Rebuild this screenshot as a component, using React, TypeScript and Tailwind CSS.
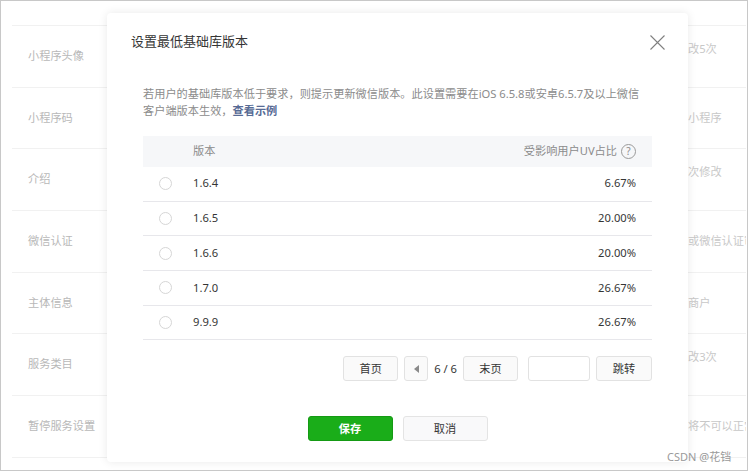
const bgRows = [
  { label: '小程序头像', note: '改5次', top: true },
  { label: '小程序码', note: '小程序', top: false },
  { label: '介绍', note: '次修改', top: true },
  { label: '微信认证', note: '或微信认证审', top: false },
  { label: '主体信息', note: '商户', top: false },
  { label: '服务类目', note: '改3次', top: true },
  { label: '暂停服务设置', note: '将不可以正常', top: false },
]

const versions = [
  { v: '1.6.4', uv: '6.67%' },
  { v: '1.6.5', uv: '20.00%' },
  { v: '1.6.6', uv: '20.00%' },
  { v: '1.7.0', uv: '26.67%' },
  { v: '9.9.9', uv: '26.67%' },
]

function PageButton({ children, width }: { children: React.ReactNode; width: string }) {
  return (
    <button
      className={`${width} h-[25px] flex items-center justify-center rounded-[3px] border border-[#e2e2e2] bg-[#fafafa] text-[11.2px] text-[#353535]`}
    >
      {children}
    </button>
  )
}

export default function App() {
  return (
    <div className="relative w-[748px] h-[471px] overflow-hidden bg-white border border-[#c8c8c8] font-[family-name:'Noto_Sans','Noto_Sans_CJK_SC',sans-serif]">
      {/* page behind the dialog */}
      <ul className="mt-[24px] ml-[11px] mr-[1px] border-t border-[#f1f1f1]">
        {bgRows.map((row) => (
          <li key={row.label} className="flex h-[61.7px] border-b border-[#f1f1f1]">
            <span className="w-[676px] shrink-0 self-center pl-[16px] text-[11.2px] text-[#b8b8b8]">
              {row.label}
            </span>
            <span
              className={`flex-1 min-w-0 overflow-hidden whitespace-nowrap text-[11.2px] text-[#c8c8c8] ${
                row.top ? 'self-start pt-[15px]' : 'self-center'
              }`}
            >
              {row.note}
            </span>
          </li>
        ))}
      </ul>

      {/* dialog */}
      <div className="absolute left-[106px] top-[12px] w-[581px] h-[449px] flex flex-col rounded-[4px] bg-white shadow-[0_0_10px_rgba(0,0,0,0.09)]">
        <div className="flex items-center justify-between h-[58px] pl-[24px] pr-[23px]">
          <h2 className="text-[13px] text-[#353535]">设置最低基础库版本</h2>
          <svg width="15" height="15" viewBox="0 0 15 15">
            <path d="M0.5 0.5 L14.5 14.5 M14.5 0.5 L0.5 14.5" stroke="#7f7f7f" strokeWidth="1.1" />
          </svg>
        </div>

        <div className="px-[36px] pt-[14px]">
          <p className="text-[11.2px] leading-[17px] text-[#8b8b8b] whitespace-nowrap">
            若用户的基础库版本低于要求，则提示更新微信版本。此设置需要在iOS 6.5.8或安卓6.5.7及以上微信
            <br />
            客户端版本生效，<a className="font-semibold text-[#576b95]">查看示例</a>
          </p>

          <div className="mt-[16.5px]">
            <div className="flex items-center h-[31.5px] bg-[#f6f7f9] pr-[16px] text-[11.2px] text-[#8b8b8b]">
              <span className="w-[50px] shrink-0" />
              <span className="flex-1">版本</span>
              <span className="flex items-center gap-[4px]">
                受影响用户UV占比
                <span className="flex items-center justify-center w-[15px] h-[15px] rounded-full border border-[#9a9a9a] text-[10px] leading-none text-[#8b8b8b]">
                  ?
                </span>
              </span>
            </div>
            {versions.map((row) => (
              <div
                key={row.v}
                className="flex items-center h-[34.7px] border-b border-[#e7e7eb] pr-[16px] text-[11.2px] text-[#353535]"
              >
                <span className="w-[50px] shrink-0 pl-[16px]">
                  <span className="block w-[13px] h-[13px] rounded-full border border-[#d6d6d6] bg-white" />
                </span>
                <span className="flex-1">{row.v}</span>
                <span>{row.uv}</span>
              </div>
            ))}
          </div>

          <div className="flex items-center justify-end mt-[16px]">
            <PageButton width="w-[55px]">首页</PageButton>
            <div className="ml-[6px]">
              <PageButton width="w-[24px]">
                <svg width="5" height="8" viewBox="0 0 5 8">
                  <polygon points="5,0 5,8 0,4" fill="#8a8a8a" />
                </svg>
              </PageButton>
            </div>
            <span className="mx-[6px] text-[11.2px] text-[#353535]">6 / 6</span>
            <PageButton width="w-[55px]">末页</PageButton>
            <span className="ml-[10px] w-[62px] h-[25px] rounded-[3px] border border-[#e2e2e2] bg-white" />
            <div className="ml-[6px]">
              <PageButton width="w-[56px]">跳转</PageButton>
            </div>
          </div>
        </div>

        <div className="flex justify-center gap-[10px] mt-[35px]">
          <button className="w-[85px] h-[25px] rounded-[3px] border border-[#159a14] bg-[#1aad19] text-[11.2px] font-bold text-white">
            保存
          </button>
          <button className="w-[85px] h-[25px] rounded-[3px] border border-[#e4e4e4] bg-[#f9f9fa] text-[11.2px] text-[#353535]">
            取消
          </button>
        </div>
      </div>

      <span className="absolute left-[666px] top-[448px] text-[11px] text-[#9a9a9a]">CSDN @花铛</span>
    </div>
  )
}
